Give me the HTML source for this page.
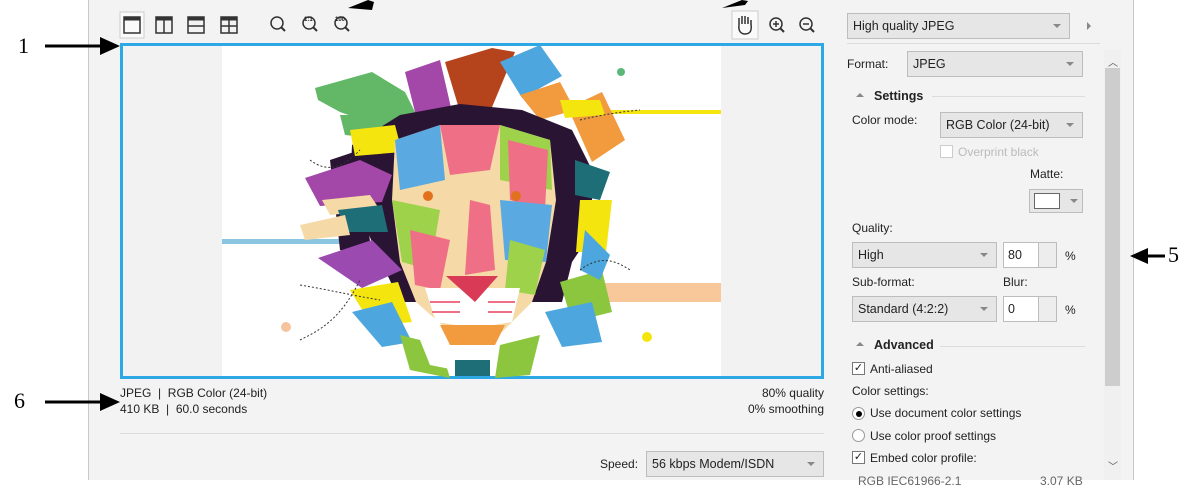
<!DOCTYPE html>
<html><head><meta charset="utf-8"><style>
*{margin:0;padding:0;box-sizing:border-box}
body{width:1200px;height:480px;overflow:hidden;background:#fff;font-family:"Liberation Sans",sans-serif;font-size:12px;color:#222;position:relative}
.a{position:absolute;white-space:nowrap}
.dd{position:absolute;background:#e6e6e6;border:1px solid #bdbdbd;padding-left:5px;font-size:12.5px}
.dd:after{content:"";position:absolute;right:8px;top:50%;margin-top:-2px;border-left:4px solid transparent;border-right:4px solid transparent;border-top:4px solid #888}
.ib{position:absolute;background:#fff;border:1px solid #bdbdbd;padding-left:4px;font-size:12.5px}
.sp{position:absolute;background:#ededed;border:1px solid #bdbdbd;border-left:none}
.hdr{position:absolute;font-weight:bold;font-size:12.5px}
.cb{position:absolute;width:13px;height:13px;border:1px solid #777;background:#fff;font-size:11px;line-height:11px;text-align:center}
.rd{position:absolute;width:13px;height:13px;border-radius:50%;border:1px solid #999;background:#fff}
.ann{position:absolute;font-family:"Liberation Serif",serif;font-size:22px;color:#000}
</style></head><body>
<div class="a" style="left:88px;top:0;width:1046px;height:480px;background:#f3f3f3;border-left:1px solid #c8c8c8;border-right:1px solid #c8c8c8"></div>

<svg class="a" style="left:0;top:0" width="1200" height="480">
<line x1="45" y1="46" x2="100" y2="46" stroke="#000" stroke-width="3"/><polygon points="100,37 120,46 100,55" fill="#000"/>
<line x1="45" y1="402" x2="100" y2="402" stroke="#000" stroke-width="3"/><polygon points="100,393 120,402 100,411" fill="#000"/>
<line x1="1148" y1="256" x2="1165" y2="256" stroke="#000" stroke-width="3"/><polygon points="1148,248 1130,256 1148,264" fill="#000"/>
<polygon points="348,8 368,0 374,2 372,10" fill="#000"/>
<polygon points="722,8 742,0 748,1 745,5" fill="#000"/>
</svg>
<div class="ann" style="left:18px;top:33px">1</div>
<div class="ann" style="left:14px;top:388px">6</div>
<div class="ann" style="left:1168px;top:242px">5</div>

<svg class="a" style="left:110px;top:8px" width="260" height="36" fill="none" stroke="#333" stroke-width="1.5">
<rect x="10" y="4" width="24" height="26" fill="#fafafa" stroke="#ccc" stroke-width="1"/>
<rect x="14" y="9" width="16" height="16"/><line x1="14" y1="11" x2="30" y2="11" stroke-width="3"/>
<rect x="46" y="9" width="16" height="16"/><line x1="46" y1="11" x2="62" y2="11" stroke-width="3"/><line x1="54" y1="9" x2="54" y2="25"/>
<rect x="78" y="9" width="16" height="16"/><line x1="78" y1="11" x2="94" y2="11" stroke-width="3"/><line x1="78" y1="18" x2="94" y2="18"/>
<rect x="111" y="9" width="16" height="16"/><line x1="111" y1="11" x2="127" y2="11" stroke-width="3"/><line x1="111" y1="18" x2="127" y2="18"/><line x1="119" y1="9" x2="119" y2="25"/>
<circle cx="167" cy="15" r="6"/><line x1="171" y1="19" x2="175" y2="23" stroke-width="2"/>
<circle cx="199" cy="15" r="6"/><line x1="203" y1="19" x2="207" y2="23" stroke-width="2"/>
<circle cx="231" cy="15" r="6"/><line x1="235" y1="19" x2="239" y2="23" stroke-width="2"/>
</svg>
<div class="a" style="left:304px;top:17px;font-size:6px;font-weight:bold">1:1</div>
<div class="a" style="left:335px;top:17px;font-size:6px;font-weight:bold">100</div>
<svg class="a" style="left:730px;top:10px" width="100" height="32" fill="none" stroke="#333" stroke-width="1.5">
<rect x="2" y="1" width="26" height="28" fill="#fafafa" stroke="#ccc" stroke-width="1"/>
<path d="M9 15 V8 M12 14 V6 M15 14 V6 M18 14 V7 M21 15 V10 M9 15 C8 22 12 24 15 24 C20 24 22 21 21 14"/>
<circle cx="46" cy="14" r="6"/><line x1="50" y1="18" x2="54" y2="22" stroke-width="2"/><line x1="43" y1="14" x2="49" y2="14"/><line x1="46" y1="11" x2="46" y2="17"/>
<circle cx="76" cy="14" r="6"/><line x1="80" y1="18" x2="84" y2="22" stroke-width="2"/><line x1="73" y1="14" x2="79" y2="14"/>
</svg>

<div class="a" style="left:120px;top:43px;width:704px;height:336px;border:3px solid #2ea8e5;background:#f2f2f2"></div>
<div class="a" style="left:222px;top:46px;width:499px;height:330px;background:#fff"></div>
<svg class="a" style="left:0;top:0" width="1200" height="480">
<rect x="590" y="110" width="131" height="4" fill="#f5e50f"/>
<rect x="222" y="239" width="120" height="5" fill="#8ac6e0"/>
<rect x="585" y="283" width="136" height="19" fill="#f8c79a"/>
<circle cx="621" cy="72" r="4" fill="#5cb87a"/><circle cx="286" cy="327" r="5" fill="#f5c49f"/><circle cx="647" cy="337" r="5" fill="#f5e50f"/>
<polygon points="315,88 372,72 405,92 420,122 380,126 340,112 318,100" fill="#62b866"/>
<polygon points="340,115 390,115 395,140 345,135" fill="#62b866"/>
<polygon points="405,72 440,60 452,112 420,132" fill="#a347a8"/>
<polygon points="445,62 492,48 515,52 490,112 460,112" fill="#b5441c"/>
<polygon points="500,62 540,45 562,76 522,98" fill="#4da6dd"/>
<polygon points="520,95 560,82 575,110 540,120" fill="#f19a3e"/>
<polygon points="352,145 400,115 460,104 522,110 572,130 592,170 592,232 572,262 562,302 400,302 372,242 350,190" fill="#2a1433"/>
<polygon points="330,160 360,150 372,260 340,250" fill="#2a1433"/>
<polygon points="350,130 395,125 402,152 355,156" fill="#f5e50f"/>
<polygon points="568,108 602,92 625,140 592,162" fill="#f19a3e"/>
<polygon points="560,100 600,100 605,115 565,118" fill="#f5e50f"/>
<polygon points="305,178 360,160 392,175 382,202 320,206" fill="#a347a8"/>
<polygon points="322,200 370,195 380,210 330,215" fill="#f5d9a6"/>
<polygon points="338,210 382,205 388,232 345,232" fill="#1e6e78"/>
<polygon points="318,258 372,240 402,270 362,288" fill="#9b4bb0"/>
<polygon points="300,225 345,215 350,235 305,240" fill="#f5d9a6"/>
<polygon points="350,290 398,282 412,322 372,326" fill="#f5e50f"/>
<polygon points="352,312 392,302 412,342 382,347" fill="#4da6dd"/>
<polygon points="560,282 602,270 612,312 572,322" fill="#8cc63f"/>
<polygon points="545,312 592,302 602,342 562,347" fill="#4da6dd"/>
<polygon points="580,200 612,200 606,252 576,252" fill="#f5e50f"/>
<polygon points="575,160 610,172 600,200 575,195" fill="#1e6e78"/>
<polygon points="585,230 610,255 600,280 580,270" fill="#4da6dd"/>
<polygon points="395,140 440,125 500,125 550,140 556,200 546,262 532,302 502,332 450,332 416,302 400,262 392,200" fill="#f5d9a6"/>
<polygon points="395,140 440,125 445,180 400,190" fill="#5aa9e0"/>
<polygon points="440,125 500,125 490,170 450,175" fill="#ef6f86"/>
<polygon points="500,125 550,140 552,190 500,180" fill="#9fd24b"/>
<polygon points="508,140 548,150 545,210 510,200" fill="#ef6f86"/>
<polygon points="392,200 440,210 430,270 402,262" fill="#9fd24b"/>
<polygon points="410,230 450,240 440,290 415,285" fill="#ef6f86"/>
<polygon points="500,200 552,205 546,262 505,260" fill="#5aa9e0"/>
<polygon points="470,200 490,205 495,270 465,275" fill="#ef6f86"/>
<polygon points="510,240 545,250 535,295 505,290" fill="#9fd24b"/>
<circle cx="428" cy="196" r="5" fill="#e2711d"/><circle cx="516" cy="196" r="5" fill="#e2711d"/>
<polygon points="425,288 520,288 512,322 475,328 436,322" fill="#fff"/>
<polygon points="446,276 498,276 475,302" fill="#d93a55"/>
<path d="M430 302 H460 M488 302 H515 M432 312 H460 M488 312 H512" stroke="#ef6f86" stroke-width="2"/>
<polygon points="440,325 505,325 495,345 450,345" fill="#f19a3e"/>
<polygon points="400,335 440,345 450,378 410,370" fill="#8cc63f"/>
<polygon points="500,345 540,335 530,375 495,378" fill="#8cc63f"/>
<polygon points="420,340 450,345 455,370 430,365" fill="#fff"/>
<rect x="455" y="360" width="35" height="16" fill="#1e6e78"/>
<path d="M310 160 C330 175 345 165 360 150 M300 340 C320 330 340 320 360 280 M580 270 C600 255 615 260 630 270 M580 120 C600 115 620 112 640 110 M300 285 C330 290 350 295 380 300" stroke="#333" stroke-width="1" stroke-dasharray="2 2" fill="none"/>
</svg>

<div class="a" style="left:120px;top:386px">JPEG &nbsp;|&nbsp; RGB Color (24-bit)</div>
<div class="a" style="left:120px;top:402px">410 KB &nbsp;|&nbsp; 60.0 seconds</div>
<div class="a" style="right:376px;top:386px">80% quality</div>
<div class="a" style="right:376px;top:402px">0% smoothing</div>
<div class="a" style="left:120px;top:433px;width:704px;height:1px;background:#dcdcdc"></div>
<div class="a" style="left:600px;top:457px">Speed:</div>
<div class="dd" style="left:646px;top:451px;width:178px;height:26px;line-height:24px">56 kbps Modem/ISDN</div>

<div class="dd" style="left:847px;top:13px;width:223px;height:26px;line-height:24px">High quality JPEG</div>
<div class="a" style="left:1087px;top:22px;border-top:4px solid transparent;border-bottom:4px solid transparent;border-left:4px solid #888"></div>
<div class="a" style="left:847px;top:43px;width:253px;height:1px;background:#dcdcdc"></div>
<div class="a" style="left:847px;top:57px">Format:</div>
<div class="dd" style="left:907px;top:51px;width:176px;height:26px;line-height:24px">JPEG</div>
<div class="a" style="left:856px;top:93px;border-left:4px solid transparent;border-right:4px solid transparent;border-bottom:4px solid #888"></div>
<div class="hdr" style="left:874px;top:89px">Settings</div>
<div class="a" style="left:932px;top:96px;width:153px;height:1px;background:#dcdcdc"></div>
<div class="a" style="left:852px;top:113px">Color mode:</div>
<div class="dd" style="left:940px;top:112px;width:143px;height:26px;line-height:24px">RGB Color (24-bit)</div>
<div class="cb" style="left:940px;top:145px;border-color:#ccc"></div>
<div class="a" style="left:958px;top:145px;color:#bbb">Overprint black</div>
<div class="a" style="left:1030px;top:167px">Matte:</div>
<div class="a" style="left:1029px;top:189px;width:54px;height:24px;border:1px solid #bdbdbd;background:#e6e6e6"></div>
<div class="a" style="left:1034px;top:193px;width:26px;height:16px;border:1px solid #666;background:#fff"></div>
<div class="a" style="left:1070px;top:199px;border-left:4px solid transparent;border-right:4px solid transparent;border-top:4px solid #888"></div>
<div class="a" style="left:852px;top:221px">Quality:</div>
<div class="dd" style="left:852px;top:242px;width:145px;height:26px;line-height:24px">High</div>
<div class="ib" style="left:1003px;top:242px;width:36px;height:26px;line-height:24px">80</div>
<div class="sp" style="left:1039px;top:242px;width:18px;height:26px"></div>
<div class="a" style="left:1065px;top:249px">%</div>
<div class="a" style="left:852px;top:275px">Sub-format:</div>
<div class="a" style="left:1003px;top:275px">Blur:</div>
<div class="dd" style="left:852px;top:296px;width:145px;height:26px;line-height:24px">Standard (4:2:2)</div>
<div class="ib" style="left:1003px;top:296px;width:36px;height:26px;line-height:24px">0</div>
<div class="sp" style="left:1039px;top:296px;width:18px;height:26px"></div>
<div class="a" style="left:1065px;top:303px">%</div>
<div class="a" style="left:856px;top:342px;border-left:4px solid transparent;border-right:4px solid transparent;border-bottom:4px solid #888"></div>
<div class="hdr" style="left:874px;top:338px">Advanced</div>
<div class="a" style="left:940px;top:346px;width:145px;height:1px;background:#dcdcdc"></div>
<div class="cb" style="left:852px;top:362px">✓</div>
<div class="a" style="left:870px;top:362px">Anti-aliased</div>
<div class="a" style="left:852px;top:384px">Color settings:</div>
<div class="rd" style="left:852px;top:407px"></div><div class="a" style="left:856px;top:411px;width:6px;height:6px;border-radius:50%;background:#000"></div>
<div class="a" style="left:870px;top:406px">Use document color settings</div>
<div class="rd" style="left:852px;top:429px"></div>
<div class="a" style="left:870px;top:429px">Use color proof settings</div>
<div class="cb" style="left:852px;top:451px">✓</div>
<div class="a" style="left:870px;top:451px">Embed color profile:</div>
<div class="a" style="left:858px;top:474px;color:#666">RGB IEC61966-2.1</div>
<div class="a" style="left:1040px;top:474px;color:#666">3.07 KB</div>
<div class="a" style="left:1104px;top:50px;width:17px;height:430px;background:#f0f0f0"></div>
<div class="a" style="left:1105px;top:68px;width:15px;height:318px;background:#cdcdcd"></div>
<div class="a" style="left:1108px;top:54px;font-size:10px;color:#555">︿</div>
<div class="a" style="left:1108px;top:458px;font-size:10px;color:#555">﹀</div>
</body></html>
